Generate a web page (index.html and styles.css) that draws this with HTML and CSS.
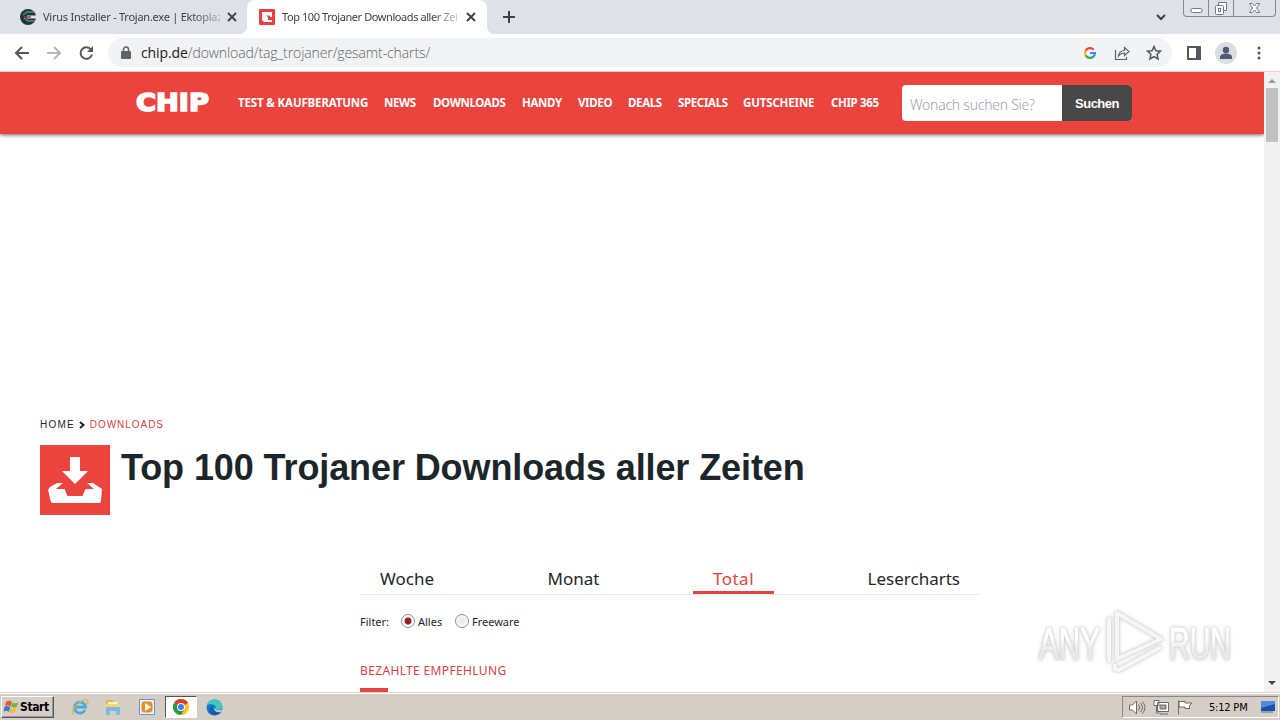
FILE: index.html
```html
<!doctype html>
<html lang="de">
<head>
<meta charset="utf-8">
<title>Top 100 Trojaner Downloads aller Zeiten</title>
<link rel="stylesheet" href="styles.css">
</head>

<body>
<div class="tabs">
	<div class="tab">
		<svg class="favicon" width="16" height="16" viewBox="0 0 16 16"><circle cx="8" cy="8" r="8" fill="#25343a"/><path d="M14 3H7L3 6M15 12H8L4 9" fill="none" stroke="#3d9a78" stroke-width="1.500"/><path d="M7 8h9" stroke="#dee1e6" stroke-width="3"/><path d="M4 8h7" stroke="#a03345" stroke-width="1.500"/></svg>
		<span class="tab_title">Virus Installer - Trojan.exe | Ektoplaz</span>
		<svg class="close" width="10" height="10" viewBox="0 0 10 10"><path d="M1 1l8 8M9 1l-8 8"/></svg>
	</div>
	<div class="tab active">
		<svg class="favicon" width="16" height="16" viewBox="0 0 16 16"><rect width="16" height="16" rx="1" fill="#e7403e"/><path d="M3 3h10v5h-2V6.500H7L9 8v3h4v2H5l-2-2z" fill="#fff"/></svg>
		<span class="tab_title">Top 100 Trojaner Downloads aller Zei</span>
		<svg class="close" width="10" height="10" viewBox="0 0 10 10"><path d="M1 1l8 8M9 1l-8 8"/></svg>
	</div>
	<svg class="plus" width="12" height="12" viewBox="0 0 12 12"><path d="M6 0v12M0 6h12"/></svg>
	<svg class="chevron" width="10" height="7" viewBox="0 0 10 7"><path d="M1 1l4 4 4-4"/></svg>
	<div class="winbtns">
		<span class="min"><svg width="13" height="16" viewBox="0 0 13 16"><rect x="1" y="8.500" width="11" height="4" rx="1.500"/></svg></span>
		<span class="max"><svg width="14" height="16" viewBox="0 0 14 16"><path d="M4.500 5V2.500h8v8H10"/><rect x="1.500" y="5.500" width="8" height="9" rx="1"/><rect x="4.500" y="8.500" width="2" height="3"/></svg></span>
		<span class="cls"><svg width="13" height="16" viewBox="0 0 13 16"><path d="M1.500 3.500h3l2 2.500 2-2.500h3L8.500 8l3 4.500h-3l-2-2.500-2 2.500h-3l3-4.500z"/></svg></span>
	</div>
</div>

<div class="toolbar">
	<svg class="nav_icons" width="82" height="16" viewBox="0 0 82 16"><path d="M15 8H2M8 2L2 8l6 6" stroke="#54575b"/><path d="M33 8h13M40 2l6 6-6 6" stroke="#b6b8ba"/><path d="M77 4.500A5.800 5.800 0 1 0 78 9.500" stroke="#54575b"/><path d="M79 1v6h-6z" fill="#54575b" stroke="none"/></svg>
	<div class="omnibox">
		<svg width="10" height="13" viewBox="0 0 10 13"><rect y="5" width="10" height="8" rx="1" fill="#5f6368"/><path d="M2.500 6V3.500a2.500 2.500 0 0 1 5 0V6" fill="none" stroke="#5f6368" stroke-width="1.500"/></svg>
		<span class="url"><b>chip.de</b>/download/tag_trojaner/gesamt-charts/</span>
		<svg class="google" width="12" height="12" viewBox="0 0 12 12"><g fill="none" stroke-width="2.200"><path d="M9.600 2.700A5 5 0 0 0 1.600 3.700" stroke="#ea4335"/><path d="M1.600 3.700a5 5 0 0 0 0 4.600" stroke="#fbbc05"/><path d="M1.600 8.300a5 5 0 0 0 7.700 1.400" stroke="#34a853"/><path d="M9.300 9.700A4.800 4.800 0 0 0 10.900 6H6" stroke="#4285f4"/></g></svg>
		<svg class="share" width="16" height="16" viewBox="0 0 16 16"><path d="M1.500 5v9.500h11V12M4.500 11c.5-4 2.500-5.500 6-5.500V2.500l4.500 4-4.500 4V8c-3 0-4.500 1-6 3z"/></svg>
		<svg class="star" width="16" height="16" viewBox="0 0 16 16"><path d="M8 1.500l1.900 4.200 4.600.5-3.400 3.100.9 4.600L8 11.500l-4 2.400.9-4.600L1.500 6.200l4.600-.5z"/></svg>
	</div>
	<svg class="panel" width="14" height="14" viewBox="0 0 14 14"><path d="M1 1h12v12H1z" fill="none" stroke="#54575b" stroke-width="2"/><path d="M9 1h4v12H9z" fill="#54575b"/></svg>
	<svg class="avatar" width="22" height="22" viewBox="0 0 22 22"><circle cx="11" cy="11" r="11" fill="#dadde2"/><circle cx="11" cy="8" r="3.200" fill="#505b72"/><path d="M5 17v-2c0-2 3-3.500 6-3.500s6 1.500 6 3.500v2z" fill="#505b72"/></svg>
	<svg class="more" width="4" height="14" viewBox="0 0 4 14"><circle cx="2" cy="2" r="1.500"/><circle cx="2" cy="7" r="1.500"/><circle cx="2" cy="12" r="1.500"/></svg>
</div>

<div class="window">
	<div class="page">
		<header class="header">
			<svg class="logo" width="80" height="28" viewBox="0 0 80 28"><text x="3" y="22" textLength="73" lengthAdjust="spacingAndGlyphs">CHIP</text></svg>
			<nav class="menu">
				<a>TEST &amp; KAUFBERATUNG</a><a>NEWS</a><a>DOWNLOADS</a><a>HANDY</a><a>VIDEO</a><a>DEALS</a><a>SPECIALS</a><a>GUTSCHEINE</a><a>CHIP 365</a>
			</nav>
			<div class="search"><span class="field">Wonach suchen Sie?</span><span class="submit">Suchen</span></div>
		</header>
		<main class="content">
			<div class="crumbs"><span>HOME</span><svg width="6" height="8" viewBox="0 0 6 8"><path d="M1 1l3.500 3L1 7" fill="none" stroke="#1c262a" stroke-width="2"/></svg><span class="red">DOWNLOADS</span></div>
			<div class="title">
				<svg width="70" height="70" viewBox="0 0 70 70"><rect width="70" height="70" fill="#eb443e"/><g fill="#fff"><path d="M30 12h10v14h8L35 39 22 26h8z"/><path d="M17 38h6l-7 6h8.500l3 7h15l3-7H54l-7-6h6l9 6-1 12q-.3 2-2 2H13q-2 0-2.300-2L8 45l2-3z"/></g></svg>
				<h1>Top 100 Trojaner Downloads aller Zeiten</h1>
			</div>
			<div class="charts">
				<div class="chart_tabs"><span>Woche</span><span>Monat</span><span class="on">Total</span><span>Lesercharts</span></div>
				<div class="filter"><span class="lbl">Filter:</span><i class="radio checked"></i><span class="alles">Alles</span><i class="radio"></i><span>Freeware</span></div>
				<div class="empf">BEZAHLTE EMPFEHLUNG</div>
			</div>
		</main>
	</div>
	<div class="scrollbar"><i class="up"></i><i class="thumb"></i><i class="down"></i></div>
	<svg class="watermark" width="204" height="72" viewBox="0 0 204 72">
		<defs><linearGradient id="wm" x1="0" y1="0" x2="0" y2="1"><stop offset=".4" stop-color="#fff"/><stop offset=".65" stop-color="#e9e9e9"/></linearGradient></defs>
		<g fill="url(#wm)" stroke="url(#wm)">
			<text x="5" y="50" textLength="61" lengthAdjust="spacingAndGlyphs">ANY</text>
			<text x="135" y="50" textLength="62" lengthAdjust="spacingAndGlyphs">RUN</text>
		</g>
		<g class="play"><path d="M83 4v46l44-20z"/><path d="M77 9l-2 1v43"/><path d="M81 55v5l4 1 42-23"/></g>
	</svg>
</div>

<div class="taskbar">
	<div class="start"><svg width="17" height="16" viewBox="0 0 17 16"><path d="M3 3c2-2 4-1.500 6 0L7.500 7.500C5.500 6 4 6 2 7z" fill="#e65a2c"/><path d="M9.500 3.500c2 1 4 1 6-.5L14 7.500c-2 1.500-4 1-6 .2z" fill="#7ab13e"/><path d="M1.500 8c2-1.500 4-1 5.700.3L6 13c-2-1.500-3.500-1.500-5.500-.5z" fill="#3c79c8"/><path d="M7.800 9c2 1 4 1 6-.5L12.300 13c-2 1.500-4 1-6 .3z" fill="#f3bd32"/></svg>Start</div>
	<svg class="ie" width="18" height="18" viewBox="0 0 18 18"><path d="M14 12a5.500 5.500 0 1 1 .5-3H5" fill="none" stroke="#48a9df" stroke-width="2.800"/><path d="M2 16C-1 13 9 1 16 2c2 .5 1 3 0 4" fill="none" stroke="#e3b443" stroke-width="1.200"/></svg>
	<svg class="folder" width="18" height="18" viewBox="0 0 18 18"><path d="M2 2h7l1 2h5v9H2z" fill="#dfba50"/><path d="M4 4h10v5H4z" fill="#fff3b5"/><path d="M1 6h15v4H1z" fill="#f0d47c"/><path d="M2 9h14v8h-4v-4H6v4H2z" fill="#7dbadf"/></svg>
	<svg class="wmp" width="16" height="16" viewBox="0 0 16 16"><path d="M.5.500h15v15H.5z" fill="#e8f2fc" stroke="#5f99cf"/><rect x="2.500" y="2.500" width="11" height="11" rx="3" fill="#f18b1d"/><path d="M6 4l6 4-6 4z" fill="#fff"/></svg>
	<div class="chrome"><svg width="16" height="16" viewBox="0 0 16 16"><circle cx="8" cy="8" r="8" fill="#fbc116"/><path d="M8 8L1.070 4A8 8 0 0 1 14.930 4z" fill="#e33b2e"/><path d="M8 8L1.070 4A8 8 0 0 0 8 16l3-5z" fill="#249a4a"/><circle cx="8" cy="8" r="4" fill="#fff"/><circle cx="8" cy="8" r="3" fill="#3d7ff0"/></svg></div>
	<svg class="edge" width="17" height="17" viewBox="0 0 17 17"><circle cx="8.500" cy="8.500" r="8" fill="#1677ce"/><path d="M1 6C3-1 15-1 16.500 7c.5 4-5 5-7 3 2-3-3-6-8.500-4z" fill="#42c7ba"/><path d="M8 7c-3 3-.5 7 7 6-3 4-8 4-11 1-2-3 0-7 4-7z" fill="#145dae"/><path d="M9 7.500c-1 3 3 5 7 3l-1 2.500c-5 1-8-2-6-5.500z" fill="#d4d0c8"/></svg>
	<div class="tray">
		<svg width="66" height="17" viewBox="0 0 66 17"><g fill="#fff" stroke="#6d6b67"><path d="M1.500 6h3l4-4v13l-4-4h-3z"/><path d="M10.500 5.500q2.500 3 0 6M12.500 4q4 4.500 0 9M14.500 2.500q5 6 0 12" fill="none"/><path d="M29.500 3.500h11v9h-11zM32 15h8M26 1.500h5v5h-5zM28.500 7v7h4"/><path d="M32 6h6v4h-6z" fill="#aaa"/><path d="M50.500 1.500v14M51 2.500h6v1.500h7l-3 3 1 2.500h-5V8h-6z"/></g></svg>
		<span>5:12 PM</span>
		<svg width="16" height="14" viewBox="0 0 16 14"><path d="M1 1h14v10H1z" fill="#1951ad"/><path d="M1 1h14v3L1 8z" fill="#4d8edc"/><path d="M1 12h12" stroke="#5a718b" stroke-width="1"/></svg>
	</div>
</div>
</body>
</html>
```
FILE: styles.css
```css
*{ margin:0; padding:0; box-sizing:border-box;}
body{ width:1280px; height:720px; overflow:hidden; display:flex; flex-direction:column; background:#fff; font-family:"Noto Sans",sans-serif; color:#1c262a;}
svg{ display:block; flex:none;}
span,a{ white-space:nowrap;}

/* tabs */
.tabs{ height:34px; flex:none; background:#dee1e7; display:flex; align-items:center; padding-left:8px;}
.tab{ width:239px; height:34px; display:flex; align-items:center; padding-left:12px;}
.tab.active{ width:240px; background:#fff; border-radius:8px 8px 0 0; position:relative;}
.tab.active:before,.tab.active:after{ content:""; position:absolute; bottom:0; width:8px; height:8px;}
.tab.active:before{ left:-8px; background:radial-gradient(circle at 0 0,transparent 8px,#fff 8px);}
.tab.active:after{ right:-8px; background:radial-gradient(circle at 8px 0,transparent 8px,#fff 8px);}
.tab_title{ width:177px; margin:0 -1px 2px 7px; font:11px "Noto Sans",sans-serif; letter-spacing:-.25px; color:#3b3e43; -webkit-mask-image:linear-gradient(90deg,#000 150px,transparent 185px);}
.active .tab_title{ letter-spacing:-.42px;}
.close{ margin-left:8px; stroke:#3c4043; stroke-width:1.8;}
.plus{ margin-left:16px; stroke:#3c4043; stroke-width:2;}
.chevron{ margin-left:641px; fill:none; stroke:#3c4043; stroke-width:2;}
.winbtns{ margin-left:17px; align-self:flex-start; width:93px; height:17px; border:1px solid #85888f; border-top:0; border-radius:0 0 4px 4px; display:flex;}
.winbtns span{ width:25px; height:16px; display:flex; justify-content:center; border-right:1px solid #85888f;}
.winbtns .cls{ width:41px; border:0;}
.winbtns svg{ fill:#fff; stroke:#777a81;}

/* toolbar */
.toolbar{ height:38px; flex:none; display:flex; align-items:center; padding-left:14px; border-bottom:1px solid #f1c9bd;}
.nav_icons{ fill:none; stroke-width:2;}
.omnibox{ width:1064px; height:29px; margin-left:12px; border-radius:15px; background:#f1f3f4; display:flex; align-items:center; padding-left:13px;}
.url{ width:949px; margin-left:10px; font:300 14px "Open Sans",sans-serif; letter-spacing:-.1px; color:#5f6368;}
.url b{ font-weight:normal; color:#202124;}
.google{ margin-left:-6px;}
.share{ margin-left:18px; fill:none; stroke:#5f6368; stroke-width:1.2;}
.star{ margin-left:16px; fill:none; stroke:#54575b; stroke-width:1.5;}
.panel{ margin-left:15px;}
.avatar{ margin-left:14px;}
.more{ margin-left:20px; fill:#54575b;}

/* page */
.window{ height:620px; flex:none; display:flex; position:relative; overflow:hidden;}
.page{ width:1264px;}
.header{ height:62px; background:#eb443e; box-shadow:0 1px 4px rgba(0,0,0,.6); display:flex; align-items:center; padding-left:133px;}
.logo text{ font:bold 24px "DejaVu Sans",sans-serif; fill:#fff; stroke:#fff; stroke-width:1.6;}
.menu{ width:664px; margin:0 0 1px 25px; display:flex; gap:16px; font:bold 11.5px "Noto Sans",sans-serif; letter-spacing:-.35px; color:#fff;}
.menu a:nth-child(1){ width:130px; letter-spacing:-.15px;}
.menu a:nth-child(2){ width:33px;}
.menu a:nth-child(3){ width:73px;}
.menu a:nth-child(4){ width:40px;}
.menu a:nth-child(5){ width:34px;}
.menu a:nth-child(6){ width:34px;}
.menu a:nth-child(7){ width:49px;}
.menu a:nth-child(8){ width:72px; letter-spacing:-.15px;}
.search{ width:230px; height:36px; display:flex; border-radius:4px; overflow:hidden; background:#fff;}
.field{ width:160px; padding-left:8px; font:300 14px/40px "Noto Sans",sans-serif; letter-spacing:-.25px; color:#a1a1b0;}
.submit{ width:70px; background:#484848; color:#fff; text-align:center; font:bold 13px/37px "Liberation Sans",sans-serif; letter-spacing:-.5px;}
.content{ padding:283px 40px 0;}
.crumbs{ height:15px; display:flex; align-items:center; font:10px "Liberation Sans",sans-serif; letter-spacing:1.2px;}
.crumbs svg{ margin:0 5px 0 4px;}
.red{ color:#d7433f; letter-spacing:.95px;}
.title{ margin-top:13px; display:flex;}
h1{ margin-left:11px; font:bold 36px/45px "Liberation Sans",sans-serif; letter-spacing:-.1px;}
.charts{ width:620px; margin:48px 0 0 320px;}
.chart_tabs{ height:32px; display:flex; justify-content:space-between; border-bottom:1px solid #e8eaea; font-size:17px; line-height:32px;}
.chart_tabs span{ padding:0 20px; height:31px;}
.chart_tabs .on{ color:#dc4540; border-bottom:3px solid #e2443f; letter-spacing:.5px;}
.filter{ margin-top:17px; height:18px; display:flex; align-items:center; font-size:11px;}
.lbl{ width:41px;}
.radio{ width:14px; height:14px; border:1px solid #8e8f8f; border-radius:50%; background:radial-gradient(circle,#e7e7e7,#fff); margin-right:3px;}
.radio.checked{ background:radial-gradient(circle,#8f242b 0 3px,#fff 4px);}
.alles{ width:37px;}
.empf{ margin-top:31px; font-size:12px; line-height:19px; letter-spacing:.35px; color:#d5433f;}
.empf:after{ content:""; display:block; width:28px; height:5px; margin-top:8px; background:#e4443f;}
.scrollbar{ width:16px; background:#f1f1f1; display:flex; flex-direction:column; align-items:center;}
.up,.down{ border:4px solid transparent;}
.up{ border-bottom-color:#999; margin-top:3px;}
.down{ border-top-color:#444; margin:auto 0 3px;}
.thumb{ width:12px; height:54px; margin-top:5px; background:#c1c1c1;}
.watermark{ position:absolute; left:1034px; top:537px; filter:drop-shadow(0 0 1px #c4c4c4) drop-shadow(0 0 2px #ddd);}
.watermark text{ font:44px "Liberation Sans",sans-serif; stroke-width:1;}
.play{ fill:none; stroke:#f6f6f6; stroke-width:4; stroke-linejoin:round;}

/* taskbar */
.taskbar{ height:28px; flex:none; background:#d4cec6; border-top:1px solid #d8d4cd; box-shadow:inset 0 1px #fff; display:flex; align-items:center; padding:1px 1px 0;}
.start{ width:53px; height:22px; border:1px solid; border-color:#fff #555 #555 #fff; box-shadow:inset -1px -1px #999; display:flex; align-items:center; font:bold 12px "DejaVu Sans Condensed","DejaVu Sans",sans-serif; letter-spacing:-.4px; color:#000; padding-left:1px;}
.ie{ margin-left:17px;}
.folder{ margin-left:15px;}
.wmp{ margin-left:17px;}
.chrome{ width:32px; height:22px; margin-left:10px; display:flex; align-items:center; justify-content:center; background:#fff; border:1px solid; border-color:#555 #fff #fff #555;}
.edge{ margin-left:9px;}
.tray{ width:157px; height:22px; margin-left:auto; border:1px solid; border-color:#888 #fff #fff #888; display:flex; align-items:center; padding-left:5px; color:#000; font:11px "DejaVu Sans Condensed","DejaVu Sans",sans-serif;}
.tray span{ width:46px; margin-left:15px; letter-spacing:-.2px;}
.tray span + svg{ margin-left:5px;}
```
